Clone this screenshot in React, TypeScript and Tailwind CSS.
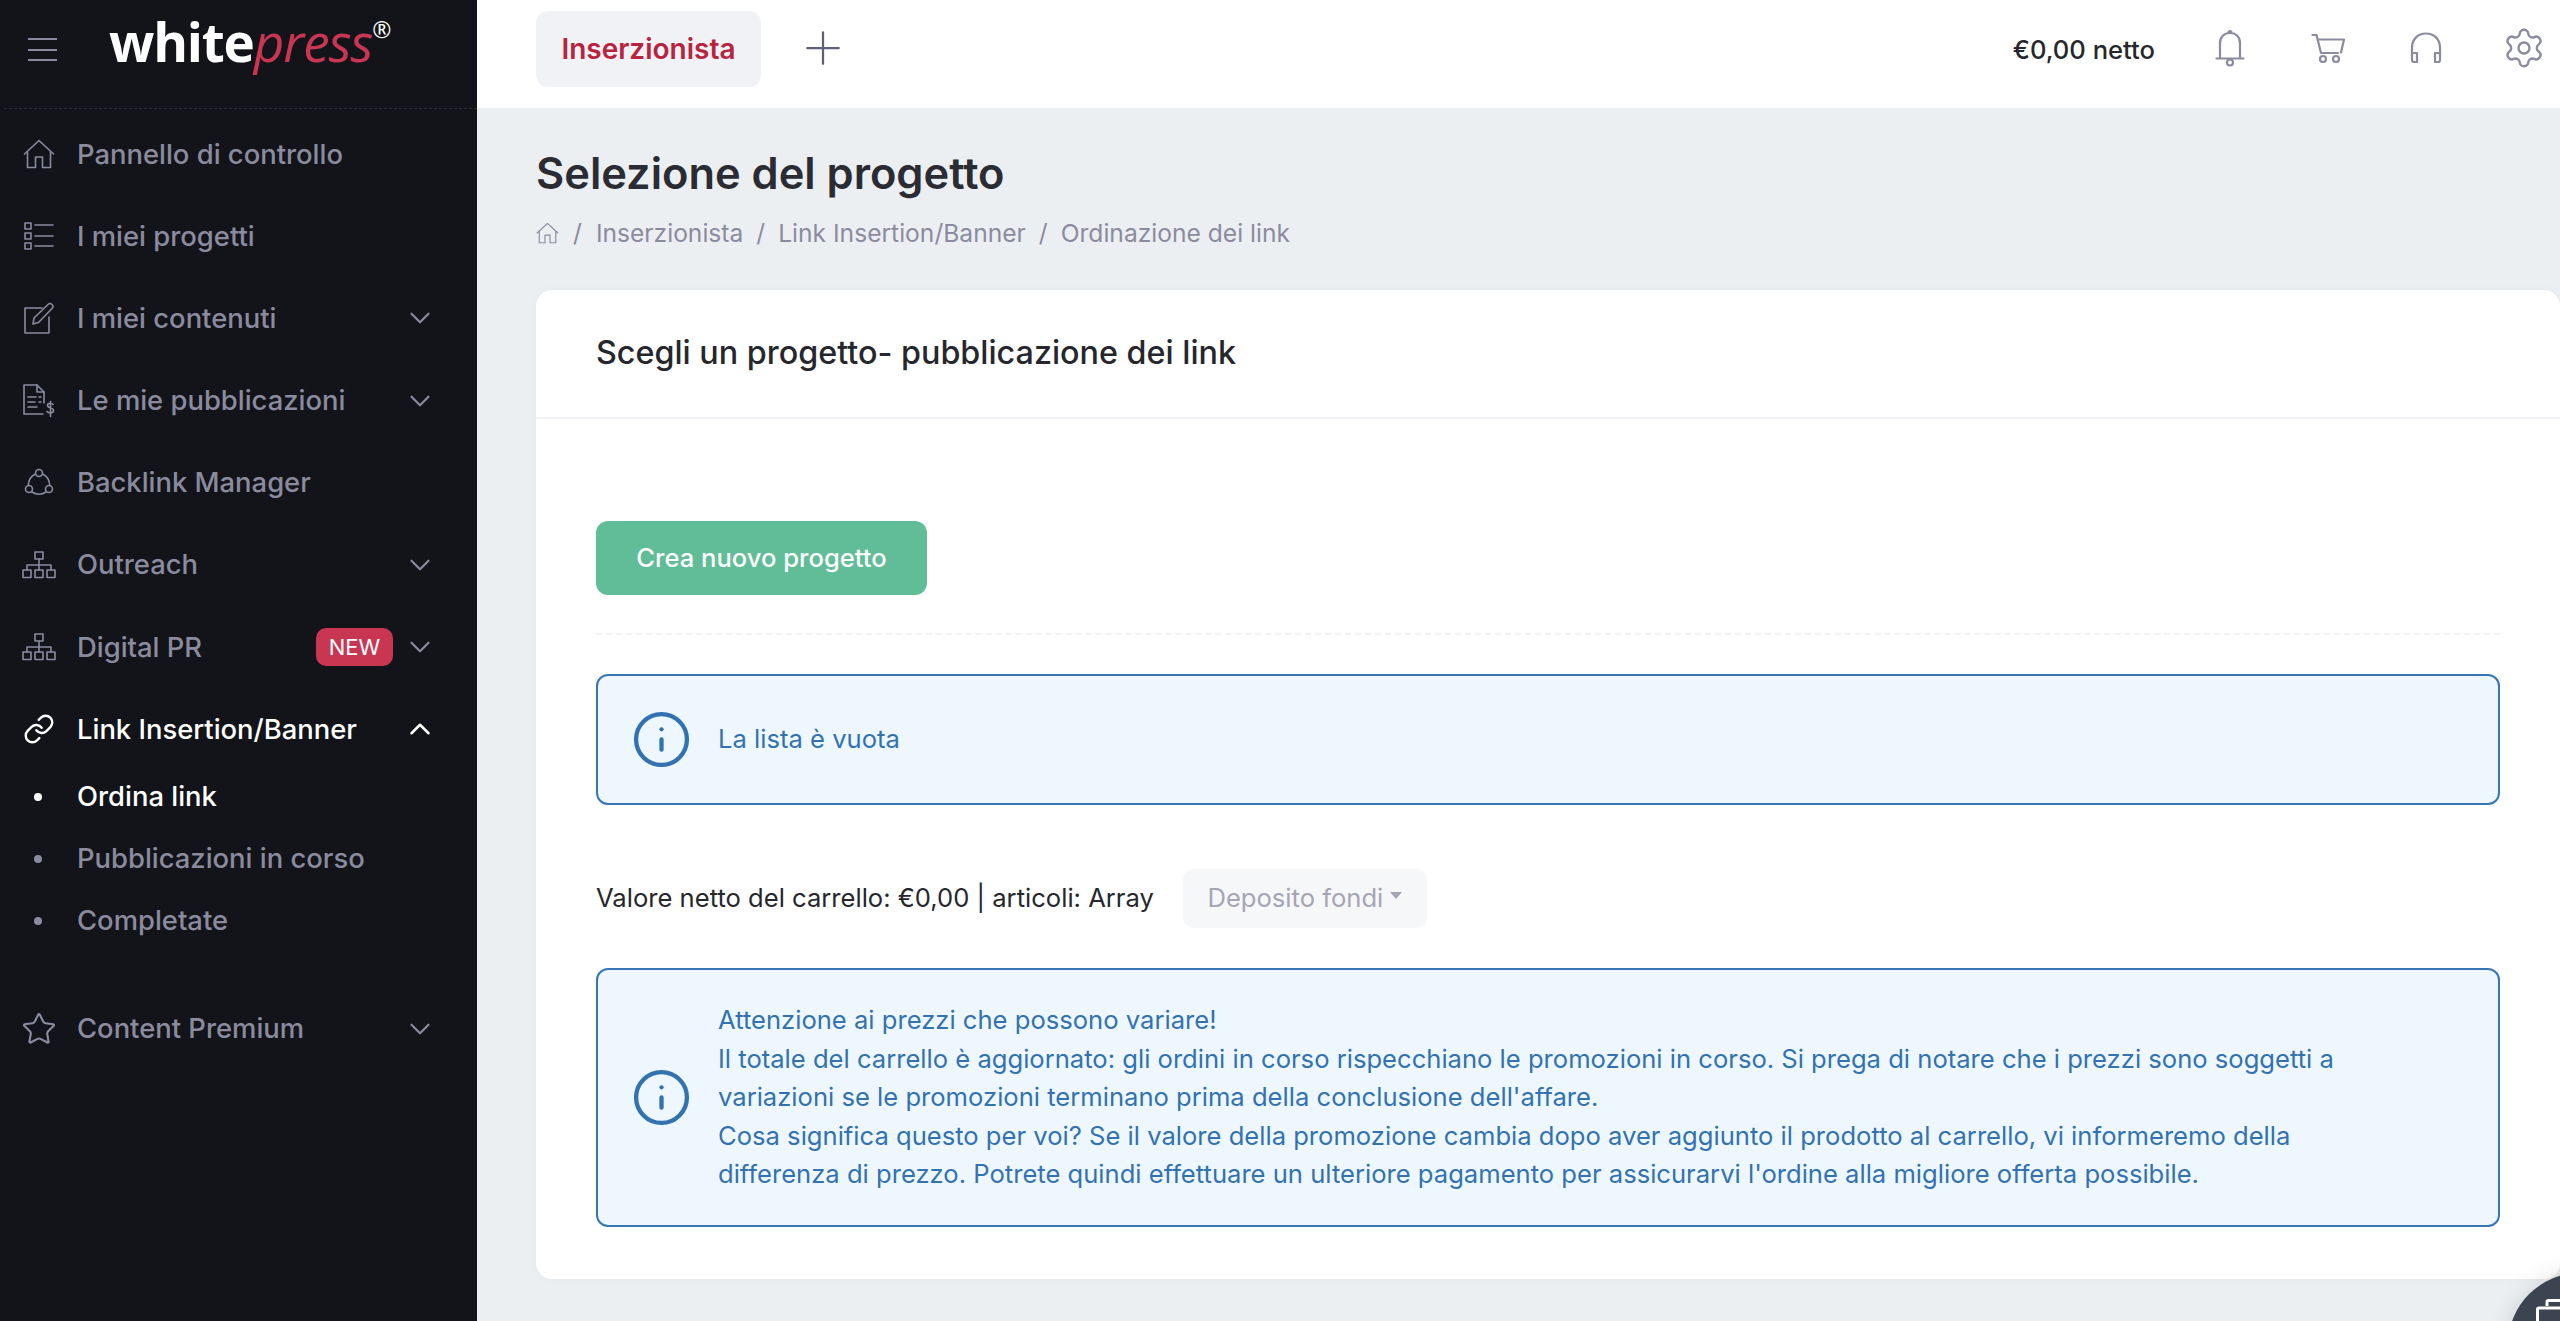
import { ChevronDown, ChevronUp, Info, Link, Plus, Star, Settings } from "lucide-react";
import type { ReactNode } from "react";

const sw = { fill: "none", stroke: "currentColor", strokeWidth: 1.6, strokeLinecap: "round", strokeLinejoin: "round" } as const;
const top = { fill: "none", stroke: "currentColor", strokeWidth: 2.2, strokeLinecap: "round", strokeLinejoin: "round" } as const;

function HomeIcon({ className }: { className: string }) {
  return (
    <svg viewBox="0 0 32 30" className={className} {...sw}>
      <path d="M1.5 15 16 1.5 30.5 15" />
      <path d="M4.5 13v15.5h8V18h7v10.5h8V13" />
    </svg>
  );
}

function ListIcon() {
  return (
    <svg viewBox="0 0 30 28" className="w-[30px] h-[28px]" {...sw}>
      <rect x="1" y="1" width="6" height="6" />
      <rect x="1" y="11" width="6" height="6" />
      <rect x="1" y="21" width="6" height="6" />
      <path d="M11 3h18M11 14h18M11 24h18" />
    </svg>
  );
}

function PenIcon() {
  return (
    <svg viewBox="0 0 32 32" className="w-[32px] h-[32px]" {...sw}>
      <path d="M19 6H2v25h24V15" />
      <path d="M11 16 25 2.500a2.800 2.800 0 0 1 4 4L15.500 20.500 10 22z" />
    </svg>
  );
}

function InvoiceIcon() {
  return (
    <svg viewBox="0 0 34 36" className="w-[34px] h-[36px]" {...sw}>
      <path d="M22 20V9l-7-7H2v29h19" />
      <path d="M15 2v7h7M6 14h8M6 19h7M6 24h9M17 19h2M17 14h2" />
      <path d="M31 21.5c-1-1.500-5.500-2-5.500 1 0 3 6 1.500 6 5 0 3-5 3-6.500 1M28.500 18.500v15" />
    </svg>
  );
}

function BacklinkIcon() {
  return (
    <svg viewBox="0 0 30 30" className="w-[30px] h-[30px]" {...sw}>
      <circle cx="15" cy="5" r="3.500" />
      <circle cx="5" cy="21" r="3.500" />
      <circle cx="25" cy="21" r="3.500" />
      <path d="M11.500 6C7 8 4.500 12 4.200 17.500M18.500 6c4.500 2 7 6 7.300 11.500M8 24c4 3 10 3 14 0" />
    </svg>
  );
}

function NetworkIcon() {
  return (
    <svg viewBox="0 0 34 28" className="w-[34px] h-[28px]" {...sw}>
      <rect x="13" y="1" width="8" height="7" />
      <rect x="1" y="19" width="8" height="7.500" />
      <rect x="13" y="19" width="8" height="7.500" />
      <rect x="25" y="19" width="8" height="7.500" />
      <path d="M17 8v11M5 19v-5h24v5" />
    </svg>
  );
}

function BellIcon() {
  return (
    <svg viewBox="0 0 30 38" className="w-[30px] h-[38px]" {...top}>
      <path d="M1.500 29.500h27M5 29.500V14c0-6 4-10 10-10s10 4 10 10v15.500" />
      <path d="M13.500 3.500a1.500 1.500 0 0 1 3 0" />
      <circle cx="15" cy="33.500" r="3" />
    </svg>
  );
}

function CartIcon() {
  return (
    <svg viewBox="0 0 34 30" className="w-[34px] h-[30px]" {...top}>
      <path d="M1.500 2h4l4.500 18h17" />
      <path d="M7 6.500h26l-3 13" />
      <circle cx="12" cy="26" r="3" />
      <circle cx="25" cy="26" r="3" />
    </svg>
  );
}

function HeadsetIcon() {
  return (
    <svg viewBox="0 0 32 32" className="w-[32px] h-[32px]" {...top}>
      <path d="M2 24V16C2 7 8 1.500 16 1.500S30 7 30 16v8" />
      <path d="M2 21h5v9H4a2 2 0 0 1-2-2zM30 21h-5v9h3a2 2 0 0 0 2-2z" />
    </svg>
  );
}

function NavRow({ icon, label, active, chevron, badge }: { icon: ReactNode; label: string; active?: boolean; chevron?: "up" | "down"; badge?: boolean }) {
  return (
    <div className={`flex items-center h-[82.2px] pl-[16px] pr-[40px] ${active ? "text-white" : "text-[#8b8b9f]"}`}>
      <div className="w-[46px] flex justify-center shrink-0">{icon}</div>
      <span className="ml-[15px] text-[27.4px] font-medium flex-1 whitespace-nowrap">{label}</span>
      {badge && (
        <span className="mr-[10px] bg-[#c93652] text-white rounded-[10px] h-[38px] w-[77px] flex items-center justify-center text-[22px]">NEW</span>
      )}
      {chevron === "down" && <ChevronDown size={34} strokeWidth={1.500} />}
      {chevron === "up" && <ChevronUp size={34} strokeWidth={1.800} />}
    </div>
  );
}

function SubRow({ label, active }: { label: string; active?: boolean }) {
  return (
    <div className={`flex items-center h-[62px] ${active ? "text-white" : "text-[#8b8b9f]"}`}>
      <div className="w-[77px] pl-[34px] shrink-0">
        <div className={`w-[8px] h-[8px] rounded-full ${active ? "bg-white" : "bg-[#8b8b9f]"}`} />
      </div>
      <span className="text-[27.4px] font-medium">{label}</span>
    </div>
  );
}

function Sidebar() {
  return (
    <aside className="w-[477px] shrink-0 bg-[#12141a]">
      <div className="h-[109px] flex items-start ml-[4px] border-b border-dashed border-[#2b2d35]">
        <div className="ml-[24px] mt-[38px] w-[29px] flex flex-col gap-[8.5px]">
          <div className="h-[2px] bg-[#8b8b9f]" />
          <div className="h-[2px] bg-[#8b8b9f]" />
          <div className="h-[2px] bg-[#8b8b9f]" />
        </div>
        <div className="ml-[52px] mt-[15px] flex items-start font-['Open_Sans',sans-serif] leading-none">
          <span className="text-[53px] font-bold text-white tracking-[-1.200px]">white</span>
          <span className="text-[53px] italic text-[#c93652] tracking-[-1px]">press</span>
          <span className="text-[23px] text-white mt-[3px]">®</span>
        </div>
      </div>
      <nav className="pt-[4px]">
        <NavRow icon={<HomeIcon className="w-[32px] h-[30px]" />} label="Pannello di controllo" />
        <NavRow icon={<ListIcon />} label="I miei progetti" />
        <NavRow icon={<PenIcon />} label="I miei contenuti" chevron="down" />
        <NavRow icon={<InvoiceIcon />} label="Le mie pubblicazioni" chevron="down" />
        <NavRow icon={<BacklinkIcon />} label="Backlink Manager" />
        <NavRow icon={<NetworkIcon />} label="Outreach" chevron="down" />
        <NavRow icon={<NetworkIcon />} label="Digital PR" chevron="down" badge />
        <NavRow icon={<Link size={32} strokeWidth={1.800} />} label="Link Insertion/Banner" chevron="up" active />
        <div className="-mt-[5px]">
          <SubRow label="Ordina link" active />
          <SubRow label="Pubblicazioni in corso" />
          <SubRow label="Completate" />
        </div>
        <div className="mt-[36px]">
          <NavRow icon={<Star size={36} strokeWidth={1.400} />} label="Content Premium" chevron="down" />
        </div>
      </nav>
    </aside>
  );
}

function Topbar() {
  return (
    <header className="h-[108px] bg-white flex items-center pl-[59px] text-[#8b8b9f]">
      <div className="h-[76px] w-[225px] -mt-[10px] rounded-[12px] bg-[#f1f2f6] flex items-center justify-center text-[28px] font-semibold text-[#b7243f]">Inserzionista</div>
      <Plus size={54} strokeWidth={1.000} className="ml-[35px] -mt-[12px] text-[#5e6077]" />
      <div className="flex-1" />
      <span className="text-[25.6px] font-medium text-[#26272c] mr-[26px] -mt-[8px]">€0,00 netto</span>
      {/* fixed slots, the gear's slot runs past the window edge */}
      <div className="flex items-center -mr-[13px] -mt-[12px] shrink-0">
        <div className="w-[98px] flex justify-center"><BellIcon /></div>
        <div className="w-[98px] flex justify-center"><CartIcon /></div>
        <div className="w-[98px] flex justify-center"><HeadsetIcon /></div>
        <div className="w-[98px] flex justify-center"><Settings size={44} strokeWidth={1.300} /></div>
      </div>
    </header>
  );
}

function Alert({ children, tall }: { children: ReactNode; tall?: boolean }) {
  return (
    <div className={`border-2 border-[#3776b5] bg-[#eff7fe] rounded-[12px] flex items-center text-[#3272b0] text-[25.6px] pl-[38px] pr-[120px] ${tall ? "h-[259px]" : "h-[131px]"}`}>
      <Info size={61} strokeWidth={1.700} className="shrink-0 -ml-[5px]" />
      <div className="ml-[26px] leading-[38.4px]">{children}</div>
    </div>
  );
}

export default function App() {
  return (
    <div className="relative flex w-[2560px] h-[1321px] overflow-hidden bg-[#eceff2] font-['Inter',sans-serif]">
      <Sidebar />
      <main className="flex-1 min-w-0">
        <Topbar />
        <div className="pl-[59px]">
          <h1 className="mt-[40px] text-[43.4px] leading-[50px] font-semibold text-[#2b2c33]">Selezione del progetto</h1>
          <div className="mt-[20px] flex items-center text-[24.6px] text-[#8b8b9f] h-[30px]">
            <HomeIcon className="w-[23px] h-[22px]" />
            <span className="ml-[14px] mr-[14px]">/</span>
            <span>Inserzionista</span>
            <span className="mx-[13px]">/</span>
            <span>Link Insertion/Banner</span>
            <span className="mx-[13px]">/</span>
            <span>Ordinazione dei link</span>
          </div>
          <section className="mt-[42px] bg-white rounded-[16px] shadow-[0_0_12px_rgba(0,0,0,0.03)] pb-[52px]">
            <div className="h-[129px] flex items-center pl-[60px] border-b-2 border-[#f1f2f6] text-[32.3px] font-medium text-[#26272c]">
              Scegli un progetto- pubblicazione dei link
            </div>
            <div className="px-[60px] pt-[102px]">
              <button className="w-[331px] h-[74px] rounded-[12px] bg-[#61bd97] text-white text-[25.6px] font-medium">Crea nuovo progetto</button>
              <div className="mt-[38px] border-t-2 border-dashed border-[#f1f2f6]" />
              <div className="mt-[39px]">
                <Alert>La lista è vuota</Alert>
              </div>
              <div className="mt-[64px] flex items-center">
                <span className="text-[25.6px] text-[#26272c]">Valore netto del carrello: €0,00 | articoli: Array</span>
                <div className="ml-[29px] w-[244px] h-[59px] rounded-[10px] bg-[#f6f7f9] text-[#a5a5b5] text-[25.6px] flex items-center justify-center">
                  Deposito fondi
                  <span className="ml-[7px] mb-[6px] border-x-[6px] border-x-transparent border-t-[7px] border-t-[#a5a5b5]" />
                </div>
              </div>
              <div className="mt-[40px]">
                <Alert tall>
                  Attenzione ai prezzi che possono variare!
                  <br />
                  Il totale del carrello è aggiornato: gli ordini in corso rispecchiano le promozioni in corso. Si prega di notare che i prezzi sono soggetti a variazioni se le promozioni terminano prima della conclusione dell'affare.
                  <br />
                  Cosa significa questo per voi? Se il valore della promozione cambia dopo aver aggiunto il prodotto al carrello, vi informeremo della differenza di prezzo. Potrete quindi effettuare un ulteriore pagamento per assicurarvi l'ordine alla migliore offerta possibile.
                </Alert>
              </div>
            </div>
          </section>
        </div>
      </main>
      {/* floating help button, mostly cut off by the window */}
      <div className="absolute left-[2508px] top-[1273px] w-[144px] h-[144px] rounded-full bg-[#3d4451] shadow-[0_0_24px_rgba(0,0,0,0.12)]">
        <svg viewBox="0 0 40 30" className="absolute left-[28px] top-[26px] w-[40px] h-[30px] text-white" fill="none" stroke="currentColor" strokeWidth="3">
          <path d="M11 7V3a1.500 1.500 0 0 1 1.500-1.500H40" />
          <path d="M40 9H3a1.500 1.500 0 0 0-1.500 1.500V30" />
        </svg>
      </div>
    </div>
  );
}
